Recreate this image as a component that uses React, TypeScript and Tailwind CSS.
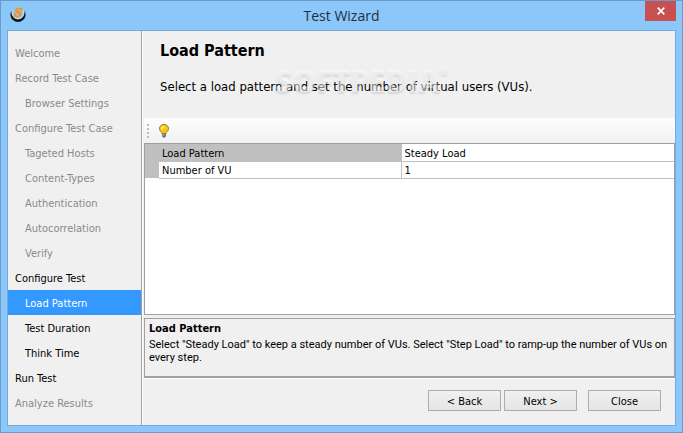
type Step = {
  label: string;
  nested?: boolean;
  state?: "done" | "current" | "open";
};

const steps: Step[] = [
  { label: "Welcome", state: "done" },
  { label: "Record Test Case", state: "done" },
  { label: "Browser Settings", nested: true, state: "done" },
  { label: "Configure Test Case", state: "done" },
  { label: "Tageted Hosts", nested: true, state: "done" },
  { label: "Content-Types", nested: true, state: "done" },
  { label: "Authentication", nested: true, state: "done" },
  { label: "Autocorrelation", nested: true, state: "done" },
  { label: "Verify", nested: true, state: "done" },
  { label: "Configure Test", state: "open" },
  { label: "Load Pattern", nested: true, state: "current" },
  { label: "Test Duration", nested: true, state: "open" },
  { label: "Think Time", nested: true, state: "open" },
  { label: "Run Test", state: "open" },
  { label: "Analyze Results", state: "done" },
];

const stateClass = {
  done: "text-[#8a8a8a]",
  current: "bg-[#3399ff] text-white",
  open: "text-black",
};

const rows = [
  { name: "Load Pattern", value: "Steady Load", selected: true },
  { name: "Number of VU", value: "1", selected: false },
];

function AppLogo() {
  return (
    <svg viewBox="0 0 16 16" className="size-4" aria-hidden="true">
      <path d="M1.500 3.500C-.4 7 .4 10.800 3 13c2.800 2.600 7.200 2.600 10 0 2.600-2.200 3.400-6 1.500-9.500.4 3.200-.4 5.500-2.200 7.200-2.400 2.300-6.200 2.300-8.600 0C1.900 9 1.100 6.700 1.500 3.500Z" fill="#101010" />
      <path d="M2.800 3C1.800 6 2.500 8.700 4.600 10.300c2 1.500 4.800 1.500 6.800 0C13.500 8.700 14.200 6 13.200 3" fill="none" stroke="#d3e3f0" strokeWidth=".8" />
      <path d="M12.300 1 11.400 4.300H10.300C10.300 2.800 9.700 2.100 8.700 2.100c-.8 0-1.300.4-1.300 1 0 1.400 4.100 1.400 4.100 4 0 1.900-1.600 3.200-3.900 3.200-.9 0-1.600-.2-2.200-.6l-.6.5H3.900l.8-3.700h1.100c0 1.600.7 2.500 1.900 2.500.8 0 1.400-.4 1.400-1.100 0-1.500-4-1.500-4-4.200C5.100 2 6.500.8 8.500.8c.9 0 1.600.2 2.200.7l.6-.5Z" fill="#f7931e" stroke="#f7931e" strokeWidth=".4" />
    </svg>
  );
}

function BulbIcon() {
  return (
    <svg viewBox="0 0 12 16" className="h-4 w-3" aria-hidden="true">
      <path d="M6 1.500c-2.700 0-4.500 1.900-4.500 4.200C1.500 8 3.900 8.700 4.300 11h3.400c.4-2.300 2.800-3 2.800-5.300C10.500 3.400 8.700 1.500 6 1.500Z" fill="#fcc80e" stroke="#96762a" />
      <path d="M3 5.500C3.100 4 4.200 2.900 5.700 2.900c.9 0 .9 1 .3 1.300C4.900 4.600 4.800 6.500 4 6.800c-.6.200-1-.6-1-1.300Z" fill="#fff08a" />
      <path d="M4 10.500h4V13l-1 1.500H5L4 13Z" fill="#6d6860" />
      <path d="M4.500 12h2" stroke="#d8d4c8" />
    </svg>
  );
}

const buttonClass =
  "h-[21px] w-[73px] border border-[#acacac] bg-linear-to-b from-[#f0f0f0] to-[#e5e5e5] pt-px text-center";

export default function App() {
  return (
    <div className="flex min-h-screen flex-col border border-[#6a9ac8] bg-[#8cc7fa] px-[6px] pb-[6px] font-['DejaVu_Sans_Condensed','DejaVu_Sans',sans-serif] text-[11px] leading-[13px] text-black">
      <header className="grid h-[29px] shrink-0 grid-cols-[1fr_auto_1fr] items-start">
        <span className="pt-[6px] pl-[3px]">
          <AppLogo />
        </span>
        <h1 className="pt-[5px] font-['Open_Sans','Noto_Sans',sans-serif] text-[14px] leading-5 text-[#1f2f40]">
          Test Wizard
        </h1>
        <button
          type="button"
          aria-label="Close window"
          className="flex h-5 w-[31px] items-center justify-center justify-self-end bg-[#c75050] text-white"
        >
          <svg viewBox="0 0 8 8" className="size-2" aria-hidden="true">
            <path d="m.7.7 6.600 6.600m0-6.600L.7 7.300" stroke="currentColor" strokeWidth="1.700" />
          </svg>
        </button>
      </header>

      <div className="flex flex-1 border border-[#78a9d8] bg-[#f0f0f0]">
        <nav
          aria-label="Wizard steps"
          className="flex w-[134px] shrink-0 flex-col border-r border-[#a0a0a0] pt-[9px]"
        >
          {steps.map((s) => (
            <button
              key={s.label}
              type="button"
              aria-current={s.state === "current" ? "step" : undefined}
              className={`h-[25px] pt-[2px] text-left ${s.nested ? "pl-[17px]" : "pl-[7px]"} ${stateClass[s.state ?? "open"]}`}
            >
              {s.label}
            </button>
          ))}
        </nav>

        <main className="flex min-w-0 flex-1 flex-col border-l border-white pl-px">
          <div className="h-[87px] pt-[10px] pl-4">
            <h2 className="text-[16px] leading-5 font-bold">Load Pattern</h2>
            <div className="relative pt-[18px]">
              <p className="text-[13px] leading-4">
                Select a load pattern and set the number of virtual users (VUs).
              </p>
              <span
                aria-hidden="true"
                className="absolute top-1 left-[115px] font-['Open_Sans',sans-serif] text-[30px] leading-8 font-extrabold text-white/50 [text-shadow:0_2px_2px_rgba(0,0,0,0.1)]"
              >
                SOFTPEDIA
                <sup className="absolute top-0 left-full text-[10px] leading-3">®</sup>
              </span>
            </div>
          </div>

          <div
            role="toolbar"
            aria-label="Properties"
            className="flex h-[25px] items-center gap-[9px] rounded-r-sm bg-linear-to-b from-[#fdfdfd] to-[#f1f1f1] pl-[3px]"
          >
            <span className="flex flex-col gap-[2px]">
              <i className="size-[2px] bg-[#bdbdbd]" />
              <i className="size-[2px] bg-[#bdbdbd]" />
              <i className="size-[2px] bg-[#bdbdbd]" />
              <i className="size-[2px] bg-[#bdbdbd]" />
            </span>
            <button type="button" aria-label="Hints">
              <BulbIcon />
            </button>
          </div>

          <div className="flex-1 border border-[#a0a0a0] bg-white">
            <table className="w-full table-fixed border-collapse">
              <tbody>
                {rows.map((r) => (
                  <tr key={r.name} className="h-[17px]">
                    <td className="w-[14px] bg-[#c0c0c0] p-0" />
                    <th
                      scope="row"
                      className={`w-[242px] border-r border-b border-[#c0c0c0] pt-[2px] pr-0 pb-0 pl-[3px] text-left font-normal ${r.selected ? "bg-[#c0c0c0]" : "bg-white"}`}
                    >
                      {r.name}
                    </th>
                    <td className="border-b border-[#c0c0c0] pt-[2px] pr-0 pb-0 pl-[3px]">{r.value}</td>
                  </tr>
                ))}
              </tbody>
            </table>
          </div>

          <section className="mt-[3px] h-[60px] border border-b-2 border-[#a0a0a0] px-1 pt-[3px]">
            <h3 className="leading-[14px] font-bold">Load Pattern</h3>
            <p className="pt-[2px] font-['Roboto',sans-serif]">
              Select "Steady Load" to keep a steady number of VUs. Select "Step Load" to ramp-up
              the number of VUs on every step.
            </p>
          </section>

          <footer className="flex h-[47px] justify-end border-t border-white pt-[11px] pr-[14px]">
            <button type="button" className={`${buttonClass} mr-[3px]`}>
              &lt; Back
            </button>
            <button type="button" className={`${buttonClass} mr-[11px]`}>
              Next &gt;
            </button>
            <button type="button" className={buttonClass}>
              Close
            </button>
          </footer>
        </main>
      </div>
    </div>
  );
}
